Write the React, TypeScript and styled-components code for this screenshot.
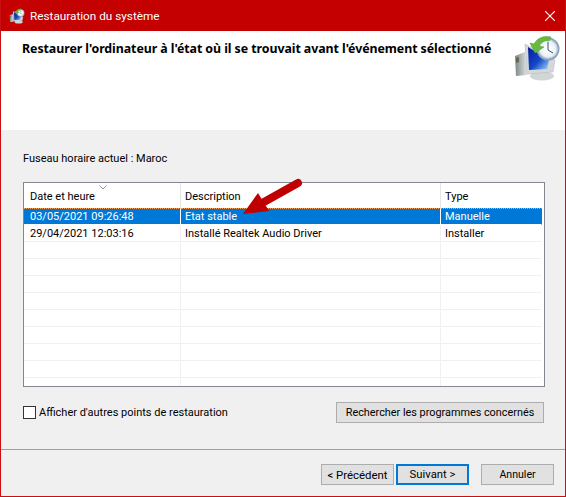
import React from "react";
import styled, { createGlobalStyle } from "styled-components";

const Global = createGlobalStyle`
  html, body { margin: 0; padding: 0; background: #f0f0f0; }
  * { box-sizing: border-box; }
`;

const Window = styled.div`
  width: 566px;
  height: 497px;
  display: flex;
  flex-direction: column;
  border: 1px solid #c80f14;
  border-top: none;
  background: #f0f0f0;
  font-family: "Roboto", "Noto Sans", sans-serif;
  font-size: 11px;
  color: #000;
  position: relative;
  overflow: hidden;
`;

const TitleBar = styled.div`
  height: 31px;
  margin: 0 -1px;
  background: #c50000;
  color: #fff;
  display: flex;
  align-items: center;
  padding: 0 11px 0 9px;
  font-size: 11.75px;
  flex: none;
`;

const TitleText = styled.span`
  margin-left: 5px;
  flex: 1;
`;

const Header = styled.div`
  height: 99px;
  flex: none;
  background: #fff;
  display: flex;
  justify-content: space-between;
  padding: 10px 1px 0 21px;
`;

const Heading = styled.div`
  font-family: "Noto Sans", sans-serif;
  font-weight: 700;
  font-size: 12.4px;
  letter-spacing: -0.07px;
  line-height: 16px;
`;

const HeaderIcon = styled.div`
  margin-top: -9px;
  flex: none;
`;

const Body = styled.div`
  flex: none;
  height: 320px;
  padding: 21px 20px 0 22px;
  display: flex;
  flex-direction: column;
  border-bottom: 1px solid #a0a0a0;
`;

const TimeZone = styled.div`
  height: 16px;
  line-height: 16px;
`;

const Table = styled.div`
  margin-top: 15px;
  height: 205px;
  border: 1px solid #828790;
  background: #fff;
  padding-right: 2px;
  overflow: hidden;
  flex: none;
`;

const Grid = styled.div`
  display: grid;
  grid-template-columns: 157px 260px 1fr;
`;

const HeadCell = styled.div<{ $first?: boolean }>`
  height: 25px;
  padding: 6px 0 0 ${(p) => (p.$first ? "6px" : "4px")};
  line-height: 16px;
  border-right: 1px solid #e5e5e5;
  position: relative;
  &:nth-child(3) { border-right: none; }
`;

const SortMark = styled.svg`
  position: absolute;
  left: 75px;
  top: 2px;
`;

const Cell = styled.div<{ $selected?: boolean; $first?: boolean; $last?: boolean }>`
  height: 17px;
  line-height: ${(p) => (p.$selected ? "15px" : "16px")};
  padding-left: ${(p) => (p.$first ? "6px" : "4px")};
  border-right: 1px solid ${(p) => (p.$last ? "transparent" : p.$selected ? "#fff" : "#f0f0f0")};
  border-bottom: 1px ${(p) => (p.$selected ? "solid #fff" : "solid #f0f0f0")};
  border-top: 1px ${(p) => (p.$selected ? "dotted #f7a35c" : "solid #fff")};
  background: ${(p) => (p.$selected ? "#0078d7" : "#fff")};
  color: ${(p) => (p.$selected ? "#fff" : "#000")};
  white-space: nowrap;
  overflow: hidden;
`;

const Row = styled.div`
  display: contents;
`;

const Options = styled.div`
  margin-top: 15px;
  display: flex;
  align-items: center;
  justify-content: space-between;
  padding-right: 1px;
`;

const CheckLabel = styled.label`
  display: flex;
  align-items: center;
  gap: 3px;
`;

const CheckBox = styled.span`
  width: 13px;
  height: 13px;
  border: 1px solid #333;
  background: #fff;
  display: block;
`;

const Button = styled.div<{ $primary?: boolean; $width: number; $size?: number }>`
  width: ${(p) => p.$width}px;
  height: 21px;
  display: flex;
  align-items: center;
  justify-content: center;
  background: #e1e1e1;
  font-size: ${(p) => p.$size ?? 11}px;
  border: ${(p) => (p.$primary ? "2px solid #0078d7" : "1px solid #adadad")};
  white-space: nowrap;
`;

const Footer = styled.div`
  flex: 1;
  display: flex;
  align-items: flex-start;
  justify-content: flex-end;
  padding: 14px 11px 0 0;
`;

const Gap = styled.div<{ $w: number }>`
  width: ${(p) => p.$w}px;
`;

const Arrow = styled.svg`
  position: absolute;
  left: 237px;
  top: 176px;
  pointer-events: none;
`;

const SystemIcon = ({ width, height, box, id }: { width: number; height: number; box: string; id: string }) => (
  <svg width={width} height={height} viewBox={box}>
    <defs>
      <linearGradient id={`scr${id}`} x1="0" y1="0" x2="1" y2="1">
        <stop offset="0" stopColor="#061a9a" />
        <stop offset="0.55" stopColor="#1248c8" />
        <stop offset="1" stopColor="#a8d8f8" />
      </linearGradient>
      <linearGradient id={`case${id}`} x1="0" y1="0" x2="1" y2="0">
        <stop offset="0" stopColor="#7d8588" />
        <stop offset="1" stopColor="#e0e2e3" />
      </linearGradient>
      <radialGradient id={`clk${id}`}>
        <stop offset="0" stopColor="#ffffff" />
        <stop offset="0.75" stopColor="#eef3f7" />
        <stop offset="1" stopColor="#a9c0d4" />
      </radialGradient>
    </defs>
    <path d="M5 24 L15 20 L17 43 L6 44 Z" fill={`url(#case${id})`} />
    <path d="M6 26 L9 25 L9 30 L6 31 Z" fill="#5f6a4d" />
    <ellipse cx="32" cy="44" rx="12" ry="4.5" fill="#d3d6d7" />
    <path d="M15 12 L45 28 L43 40 L17 42 Z" fill="#d5d8da" stroke="#b0b4b6" strokeWidth="0.5" />
    <path d="M18 15 L39 28 L37 37 L19 38 Z" fill={`url(#scr${id})`} />
    <circle cx="38" cy="17" r="11.5" fill="#8da2b6" />
    <circle cx="38" cy="17" r="10" fill={`url(#clk${id})`} />
    <path d="M38 10 L38 18 L43 21" stroke="#39506b" strokeWidth="1" fill="none" />
    <path d="M41 5 C34 3 27 6 24 12 L20 11 L25 21 L34 15 L29 14 C31 10 35 8 39 9 Z" fill="#67ba3e" stroke="#4b9a2a" strokeWidth="0.5" />
  </svg>
);

const rows: [string, string, string][] = [
  ["03/05/2021 09:26:48", "Etat stable", "Manuelle"],
  ["29/04/2021 12:03:16", "Installé Realtek Audio Driver", "Installer"],
  ...Array.from({ length: 9 }, (): [string, string, string] => ["", "", ""]),
];

export default function App() {
  return (
    <>
      <Global />
      <Window>
        <TitleBar>
          <SystemIcon width={16} height={16} box="3 3 48 46" id="small" />
          <TitleText>Restauration du système</TitleText>
          <svg width="10" height="10" viewBox="0 0 10 10">
            <path d="M0 0 L10 10 M10 0 L0 10" stroke="#fff" strokeWidth="1.1" />
          </svg>
        </TitleBar>
        <Header>
          <Heading>Restaurer l'ordinateur à l'état où il se trouvait avant l'événement sélectionné</Heading>
          <HeaderIcon>
            <SystemIcon width={54} height={52} box="0 0 54 52" id="big" />
          </HeaderIcon>
        </Header>
        <Body>
          <TimeZone>Fuseau horaire actuel : Maroc</TimeZone>
          <Table>
            <Grid>
              <HeadCell $first>
                Date et heure
                <SortMark width="8" height="5" viewBox="0 0 8 5">
                  <path d="M0.5 0.5 L4 4 L7.5 0.5" fill="none" stroke="#9a9a9a" />
                </SortMark>
              </HeadCell>
              <HeadCell>Description</HeadCell>
              <HeadCell>Type</HeadCell>
              {rows.map((r, i) => (
                <Row key={i}>
                  <Cell $first $selected={i === 0}>{r[0]}</Cell>
                  <Cell $selected={i === 0}>{r[1]}</Cell>
                  <Cell $last $selected={i === 0}>{r[2]}</Cell>
                </Row>
              ))}
            </Grid>
          </Table>
          <Options>
            <CheckLabel>
              <CheckBox />
              Afficher d'autres points de restauration
            </CheckLabel>
            <Button $width={208} $size={10.85}>Rechercher les programmes concernés</Button>
          </Options>
        </Body>
        <Footer>
          <Button $width={73} $size={11.4}>&lt; Précédent</Button>
          <Gap $w={2} />
          <Button $primary $width={73} $size={11.3}>Suivant &gt;</Button>
          <Gap $w={12} />
          <Button $width={73} $size={10.6}>Annuler</Button>
        </Footer>
        <Arrow width="68" height="44" viewBox="0 0 68 44">
          <path d="M60 7 L26 26" stroke="#c00000" strokeWidth="8" strokeLinecap="round" fill="none" />
          <path d="M5 38 L20 17 L31 35 Z" fill="#c00000" />
        </Arrow>
      </Window>
    </>
  );
}
